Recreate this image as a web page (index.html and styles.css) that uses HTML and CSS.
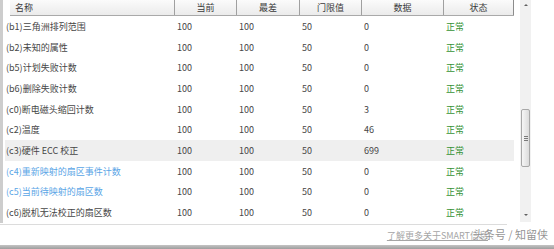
FILE: index.html
```html
<!DOCTYPE html>
<html lang="zh">
<head>
<meta charset="utf-8">
<title>SMART</title>
<link rel="stylesheet" href="styles.css">
</head>
<body>
<div class="window">
  <div class="main">
    <div class="edge"></div>
    <div class="table">
      <div class="thead">
        <div class="th th-name">名称</div>
        <div class="th">当前</div>
        <div class="th">最差</div>
        <div class="th">门限值</div>
        <div class="th">数据</div>
        <div class="th">状态</div>
      </div>
      <div class="row"><span class="name">(b1)三角洲排列范围</span><span>100</span><span>100</span><span>50</span><span>0</span><span class="ok">正常</span></div>
      <div class="row"><span class="name">(b2)未知的属性</span><span>100</span><span>100</span><span>50</span><span>0</span><span class="ok">正常</span></div>
      <div class="row"><span class="name">(b5)计划失败计数</span><span>100</span><span>100</span><span>50</span><span>0</span><span class="ok">正常</span></div>
      <div class="row"><span class="name">(b6)删除失败计数</span><span>100</span><span>100</span><span>50</span><span>0</span><span class="ok">正常</span></div>
      <div class="row"><span class="name">(c0)断电磁头缩回计数</span><span>100</span><span>100</span><span>50</span><span>3</span><span class="ok">正常</span></div>
      <div class="row"><span class="name">(c2)温度</span><span>100</span><span>100</span><span>50</span><span>46</span><span class="ok">正常</span></div>
      <div class="row row-sel"><span class="name">(c3)硬件 ECC 校正</span><span>100</span><span>100</span><span>50</span><span>699</span><span class="ok">正常</span></div>
      <div class="row"><span class="name blue">(c4)重新映射的扇区事件计数</span><span>100</span><span>100</span><span>50</span><span>0</span><span class="ok">正常</span></div>
      <div class="row"><span class="name blue">(c5)当前待映射的扇区数</span><span>100</span><span>100</span><span>50</span><span>0</span><span class="ok">正常</span></div>
      <div class="row"><span class="name">(c6)脱机无法校正的扇区数</span><span>100</span><span>100</span><span>50</span><span>0</span><span class="ok">正常</span></div>
    </div>
    <div class="scrollbar">
      <div class="arrow arrow-up"></div>
      <div class="track">
        <div class="thumb"><i></i><i></i><i></i></div>
      </div>
      <div class="arrow arrow-down"></div>
    </div>
  </div>
  <div class="footer">
    <div class="rule"></div>
    <div class="links">
      <span class="more">了解更多关于SMART信息</span>
      <span class="wm">头条号 / 知留侠</span>
    </div>
  </div>
  <div class="bottom-bar"></div>
</div>
</body>
</html>
```

FILE: styles.css
```css
* { box-sizing: border-box; }
html, body { margin: 0; padding: 0; background: #fff; }
body {
  font-family: "Noto Sans CJK SC", "Noto Sans", sans-serif;
  font-size: 9px;
  color: #464646;
}
.window {
  width: 554px;
  height: 249px;
  display: flex;
  flex-direction: column;
  overflow: hidden;
}
.main {
  display: flex;
  height: 223px;
}
.edge {
  width: 3px;
  background: #cdcdcd;
  margin-right: 2px;
}
.table {
  width: 509px;
  display: flex;
  flex-direction: column;
}
.thead {
  display: grid;
  grid-template-columns: 165px 62px 63px 62px 82px 70px;
  height: 16px;
  margin-left: 5px;
  background: linear-gradient(#fbfbfb, #ebebeb);
  border-bottom: 1px solid #a9a9a9;
}
.th {
  display: flex;
  align-items: center;
  justify-content: center;
  border-right: 1px solid #a0a0a0;
  line-height: 1;
  color: #3a3a3a;
}
.th:last-child { border-right: 1px solid #8c8c8c; }
.th-name { justify-content: flex-start; padding-left: 5px; }
.row {
  display: grid;
  grid-template-columns: 170px 62px 63px 62px 82px 70px;
  height: 20.7px;
  align-items: center;
  line-height: 1;
}
.row span { padding-left: 2px; white-space: nowrap; }
.row .name { padding-left: 1px; }
.row-sel { background: #efefef; }
.blue { color: #5aa5e6; }
.ok { color: #349234; }
.scrollbar {
  width: 11px;
  height: 222px;
  margin-left: 6px;
  background: #f1f1f1;
  display: flex;
  flex-direction: column;
  align-items: center;
}
.arrow {
  width: 0;
  height: 0;
  border-left: 2px solid transparent;
  border-right: 2px solid transparent;
}
.arrow-up { border-bottom: 2px solid #606060; margin-top: 4px; }
.arrow-down { border-top: 2px solid #606060; margin-bottom: 6px; }
.track {
  flex: 1;
  width: 100%;
  padding-top: 103px;
  display: flex;
  justify-content: center;
}
.thumb {
  width: 9px;
  height: 58px;
  border: 1px solid #a8a8a8;
  border-radius: 2px;
  background: linear-gradient(90deg, #f6f6f6, #dcdcdc);
  display: flex;
  flex-direction: column;
  align-items: center;
  justify-content: center;
  gap: 1px;
}
.thumb i {
  display: block;
  width: 4px;
  height: 1px;
  background: #7a7a7a;
}
.footer {
  height: 22px;
  position: relative;
}
.rule {
  width: 507px;
  height: 1px;
  margin-top: 1px;
  background: #dcdcdc;
}
.links {
  display: flex;
  justify-content: flex-end;
  padding-right: 4px;
  padding-top: 6px;
  position: relative;
}
.more {
  color: #a5a5a5;
  text-decoration: underline;
  margin-right: 62px;
  line-height: 1;
}
.wm {
  position: absolute;
  right: 6px;
  top: 4px;
  font-size: 11px;
  line-height: 1;
  color: rgba(110, 110, 110, 0.75);
  text-shadow: 0 0 1px #fff;
}
.bottom-bar {
  height: 4px;
  background: linear-gradient(#c4c4c4, #9e9e9e);
}
```
